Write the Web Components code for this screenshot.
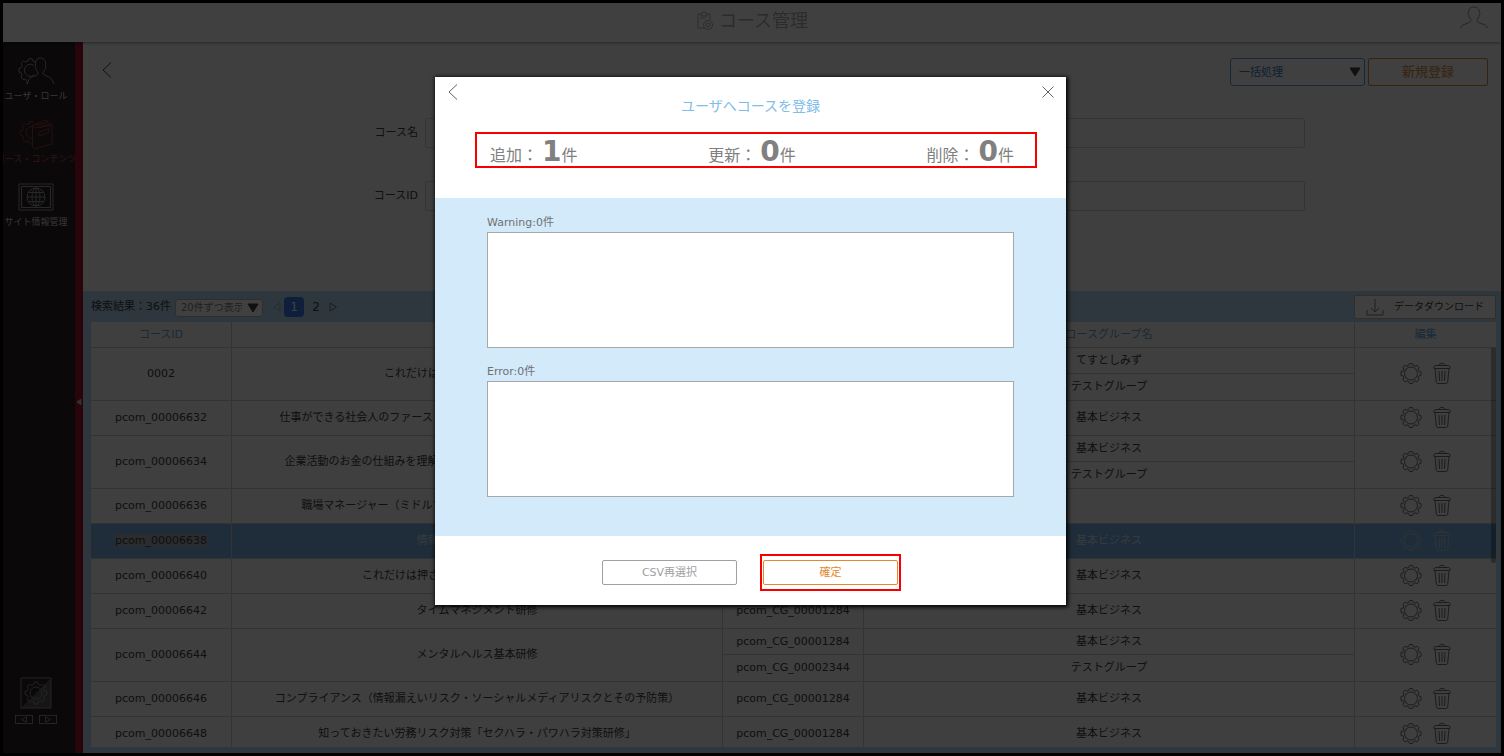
<!DOCTYPE html>
<html lang="ja">
<head>
<meta charset="utf-8">
<meta name="viewport" content="width=device-width, initial-scale=1">
<title>コース管理</title>
<style>
    html, body {
        height: 100%;
        margin: 0;
    }
    body {
        font-family: "DejaVu Sans", "Noto Sans CJK JP", sans-serif;
        font-size: 11px;
        line-height: 16px;
        color: #404040;
    }
</style>
</head>
<body>
<course-app></course-app>

<script>
const icons = {
    back: { box: '0 0 16 16', body: '<path d="M12 0.5 4 8l8 7.5"/>' },
    close: { box: '0 0 16 16', body: '<path d="M2.5 2.5l11 11M13.5 2.5l-11 11"/>' },
    down: { box: '0 0 12 10', body: '<path d="M1 1h10L6 9z" fill="currentColor"/>' },
    left: { box: '0 0 10 10', body: '<path d="M8 1 1.500 5 8 9z"/>' },
    right: { box: '0 0 10 10', body: '<path d="M2 1 8.500 5 2 9z"/>' },
    previous: { box: '0 0 10 7', body: '<path d="M7.500 1 2.500 3.500l5 2.500z"/>' },
    next: { box: '0 0 10 7', body: '<path d="M2.500 1l5 2.500-5 2.500z"/>' },
    collapse: { box: '0 0 6 6', body: '<path d="M5 0 1 3l4 3z" fill="currentColor"/>' },
    download: { box: '0 0 18 18', body: '<path d="M9 1v13M5 10l4 4 4-4M1 12v5h16v-5"/>' },
    person: { box: '0 0 28 24', body: '<path d="M1 22c0-2.500 2-3 5-4.200 3-1.100 5-1.600 5-3.500 0-1.500-2-2.500-2.300-5.300-1-.8-1-2.300 0-2.600C8.700 3 10 1 14 1s5.300 2 5.300 5.400c1 .3 1 1.800 0 2.600C19 11.800 17 12.800 17 14.300c0 1.900 2 2.400 5 3.500 3 1.200 5 1.700 5 4.200"/>' },
    course: { box: '0 0 18 20', body: '<path d="M9 17H2V3h3M11 3h3v6M5 2.500h1.500a1.500 1.500 0 0 1 3 0H11V5H5zM4 7h5"/><circle cx="12" cy="14" r="4.500"/><circle cx="12" cy="14" r="2"/>' },
    gear: { box: '0 0 24 24', body: '<path d="M10.500 1.500h3l.8 2 1.700.7 2-1 2 2-.9 2 .7 1.700 2.200.8v3.600l-2.200.8-.7 1.700.9 2-2 2-2-1-1.700.7-.8 2h-3l-.8-2-1.700-.7-2 1-2-2 .9-2-.7-1.700-2.200-.8V9.700l2.200-.8.700-1.700-.9-2 2-2 2 1 1.700-.7z"/><circle cx="12" cy="11.500" r="6.500"/>' },
    trash: { box: '0 1 20 24', body: '<path d="M7 4.500c0-2.800 6-2.800 6 0M2 7.500V6c0-1 1-1.500 2-1.500h12c1 0 2 .5 2 1.500v1.500zM3 7.500l1.300 13.500c.1.900.7 1.500 1.600 1.500h8.200c.9 0 1.500-.6 1.600-1.500L17 7.500M7 10l.5 10M10 10v10M13 10l-.5 10"/>' },
    users: { box: '0 -2 36 32', body: '<path d="M9 27v-2.500l-1.500-2.500-2.500.5-2-2.500 1-2-1.200-2.500L1 15v-3.500l2.200-.8 1-2.200-1-2.200L5.500 4l2.200 1L10 4l.7-2.200H14L15 4l2.500.8"/><path d="M15.500 18.500a6 6 0 1 1 .5-10"/><path d="M9.500 27c.3-3.500 2-6 5-7.300 3-1.200 5.500-1.700 5.500-3.700 0-1-1.500-2-2-4-1-.5-1.200-2.200-.5-2.700C17 4 18.500 1 22.500 1S28 4 27.500 9.300c.7.5.5 2.200-.5 2.700-.5 2-2 3-2 4 0 2 2.500 2.500 5.500 3.700 3 1.300 4.700 4.300 5 7.300"/>' },
    contents: { box: '0 -1 36 34', body: '<path d="M14 26h-2l-1-2.200-2-.8-2.200 1-2.300-2.300 1-2.200-1-2-2.500-.9v-3.200l2.400-.9.9-2.200L4.300 8 6.600 5.700l2.200 1 2.200-.9.800-2.300h3.200l.9 2"/><path d="M14 20.500a6 6 0 0 1 0-12"/><path d="M14.500 7.500 28 2l2 1.500M14.500 7.500v20.500c0 1.500 1.200 2.500 2.700 2.500L34 26V7.500L18 9.800c-2 .2-3.500-.8-3.500-2.300zM18 7.700l13.500-4.200M20 9.500 34 5.500M21 14l10-3.500v4L21 18z"/>' },
    site: { box: '0 0 36 28', body: '<path d="M1 1h34v26H1zM3.500 3.500h29v21h-29z"/><circle cx="18" cy="14" r="9"/><ellipse cx="18" cy="14" rx="4" ry="9"/><path d="M18 5v18M9 14h18M10.500 9.500h15M10.500 18.500h15"/>' },
    theme: { box: '0 0 32 32', body: '<path d="M31 1v30H1z" fill="#5a5858" stroke="none"/><path d="M1 1h30v30H1z"/><path d="M14.500 5h3l.8 2.500 2 .9 2.300-1.200 2.200 2.200-1.200 2.300.9 2 2.500.8v3l-2.500.8-.9 2 1.200 2.300-2.200 2.200-2.300-1.200-2 .9-.8 2.500h-3l-.8-2.500-2-.9-2.300 1.200-2.200-2.200 1.200-2.300-.9-2-2.500-.8v-3l2.500-.8.9-2-1.200-2.300 2.200-2.200 2.300 1.200 2-.9z"/><circle cx="16" cy="16" r="6"/>' },
}

function attach(element, html) {
    const template = document.createElement('template')
    template.innerHTML = html
    element.attachShadow({ mode: 'open' })
    element.shadowRoot.appendChild(template.content.cloneNode(true))
}

class AppIcon extends HTMLElement {
    static get observedAttributes() {
        return ['name']
    }
    constructor() {
        super()
        this.attachShadow({ mode: 'open' })
    }
    attributeChangedCallback() {
        const icon = icons[this.getAttribute('name')]
        const [, , width, height] = icon.box.split(' ')
        this.shadowRoot.innerHTML = `
            <style>
                :host {
                    display: block;
                    flex: none;
                }
                svg {
                    display: block;
                    fill: none;
                    stroke: currentColor;
                    stroke-width: var(--icon-stroke, 1);
                }
            </style>
            <svg viewBox="${icon.box}" width="${width}" height="${height}" aria-hidden="true">${icon.body}</svg>
        `
    }
}

// Button with an icon only
class IconButton extends HTMLElement {
    constructor() {
        super()
        attach(this, `
            <style>
                :host {
                    display: block;
                }
                button {
                    display: block;
                    margin: 0;
                    padding: 0;
                    border: 0;
                    background: none;
                    color: inherit;
                    cursor: pointer;
                }
            </style>
            <button type="button"><app-icon></app-icon></button>
        `)
        this.shadowRoot.querySelector('app-icon').setAttribute('name', this.getAttribute('icon'))
        this.shadowRoot.querySelector('button').setAttribute('aria-label', this.getAttribute('label'))
    }
}

class OutlineButton extends HTMLElement {
    constructor() {
        super()
        attach(this, `
            <style>
                :host {
                    display: block;
                    --button-color: #a0a0a0;
                }
                :host([kind=primary]) {
                    --button-color: #e08a2c;
                }
                :host([kind=plain]) {
                    --button-color: #404040;
                    --button-border: #b8b8b8;
                }
                button {
                    display: flex;
                    justify-content: center;
                    align-items: center;
                    gap: 10px;
                    box-sizing: border-box;
                    width: 100%;
                    height: 100%;
                    margin: 0;
                    padding: 0;
                    border: 1px solid var(--button-border, var(--button-color));
                    border-radius: 2px;
                    outline-offset: 2px;
                    background-color: white;
                    color: var(--button-color);
                    font: inherit;
                    cursor: pointer;
                }
            </style>
            <button type="button"><slot></slot></button>
        `)
    }
}

// Native select with a filled triangle laid over its right end
class DropDown extends HTMLElement {
    constructor() {
        super()
        attach(this, `
            <style>
                :host {
                    display: grid;
                    align-items: center;
                    color: var(--drop-color, #808080);
                }
                select, app-icon {
                    grid-area: 1 / 1;
                }
                select {
                    appearance: none;
                    box-sizing: border-box;
                    width: 100%;
                    height: 100%;
                    margin: 0;
                    padding: var(--drop-top, 0) 20px 0 var(--drop-indent, 5px);
                    border: 1px solid var(--drop-border, #b8b8b8);
                    border-radius: 3px;
                    background-color: white;
                    color: inherit;
                    font: inherit;
                }
                app-icon {
                    justify-self: end;
                    margin-right: 4px;
                    color: #404040;
                    pointer-events: none;
                }
            </style>
            <select><option></option></select>
            <app-icon name="down"></app-icon>
        `)
        this.shadowRoot.querySelector('option').textContent = this.getAttribute('value')
        this.shadowRoot.querySelector('select').setAttribute('aria-label', this.getAttribute('label'))
    }
}

class AppHeader extends HTMLElement {
    constructor() {
        super()
        attach(this, `
            <style>
                :host {
                    display: grid;
                    grid-template-columns: 1fr auto 1fr;
                    box-sizing: border-box;
                    height: 39px;
                    padding: 0 13px;
                    background-color: white;
                    box-shadow: 0 1px 3px rgba(0, 0, 0, 0.4);
                    z-index: 1;
                }
                h1 {
                    display: flex;
                    grid-column: 2;
                    align-items: center;
                    gap: 5px;
                    margin: 0;
                    font-size: 18px;
                    font-weight: normal;
                    line-height: 24px;
                    color: #b0b0b0;
                    padding-bottom: 4px;
                }
                icon-button {
                    justify-self: end;
                    padding-top: 3px;
                    color: #909090;
                }
            </style>
            <h1><app-icon name="course"></app-icon><slot></slot></h1>
            <icon-button icon="person" label="アカウント"></icon-button>
        `)
    }
}

class NavItem extends HTMLElement {
    constructor() {
        super()
        attach(this, `
            <style>
                :host {
                    display: block;
                    color: #d8d8d8;
                }
                :host([current]) {
                    color: #d04c50;
                }
                a {
                    display: flex;
                    flex-direction: column;
                    align-items: center;
                    color: inherit;
                    font-size: 9px;
                    text-decoration: none;
                    white-space: nowrap;
                }
                .picture {
                    display: flex;
                    align-items: center;
                    height: 34px;
                    opacity: 0.7;
                }
            </style>
            <a href="#"><span class="picture"><app-icon></app-icon></span><slot></slot></a>
        `)
        this.shadowRoot.querySelector('app-icon').setAttribute('name', this.getAttribute('icon'))
    }
}

class SideNav extends HTMLElement {
    constructor() {
        super()
        attach(this, `
            <style>
                :host {
                    display: flex;
                    width: 80px;
                    background-color: #282224;
                }
                nav {
                    display: flex;
                    flex: 1;
                    flex-direction: column;
                    gap: 13px;
                    min-width: 0;
                    padding: 12px 6px 29px 0;
                    overflow: hidden;
                }
                .theme {
                    display: flex;
                    flex-direction: column;
                    align-items: center;
                    gap: 6px;
                    margin-top: auto;
                    color: #909090;
                }
                .steps {
                    display: flex;
                    gap: 6px;
                }
                .steps icon-button {
                    padding: 0 3px;
                    border: 1px solid;
                }
                .edge {
                    display: flex;
                    justify-content: center;
                    align-items: center;
                    width: 8px;
                    padding-top: 8px;
                    background-color: #a8102c;
                    color: #c0c0c0;
                }
            </style>
            <nav>
                <nav-item icon="users">ユーザ・ロール</nav-item>
                <nav-item icon="contents" current>コース・コンテンツ</nav-item>
                <nav-item icon="site">サイト情報管理</nav-item>
                <div class="theme">
                    <app-icon name="theme"></app-icon>
                    <div class="steps">
                        <icon-button icon="previous" label="前へ"></icon-button>
                        <icon-button icon="next" label="次へ"></icon-button>
                    </div>
                </div>
            </nav>
            <div class="edge"><icon-button icon="collapse" label="メニューを閉じる"></icon-button></div>
        `)
    }
}

class SearchForm extends HTMLElement {
    constructor() {
        super()
        attach(this, `
            <style>
                :host {
                    display: block;
                    box-sizing: border-box;
                    min-height: 249px;
                }
                .toolbar {
                    display: flex;
                    gap: 3px;
                    height: 28px;
                    padding: 16px 13px 0 16px;
                }
                .toolbar > icon-button {
                    margin: 4px auto 0 0;
                }
                drop-down {
                    width: 135px;
                    --drop-color: #3c80c8;
                    --drop-border: #58a0e0;
                    --drop-indent: 8px;
                    --drop-top: 2px;
                }
                outline-button {
                    width: 120px;
                    font-size: 13px;
                }
                form {
                    display: grid;
                    grid-template-columns: 335px 1fr;
                    gap: 33px 7px;
                    align-items: center;
                    padding: 32px 196px 0 0;
                }
                label {
                    text-align: right;
                }
                input {
                    box-sizing: border-box;
                    width: 100%;
                    height: 30px;
                    margin: 0;
                    border: 1px solid #d0d0d0;
                    border-radius: 2px;
                    background-color: transparent;
                    font: inherit;
                }
            </style>
            <div class="toolbar">
                <icon-button icon="back" label="戻る"></icon-button>
                <drop-down value="一括処理" label="一括処理"></drop-down>
                <outline-button kind="primary">新規登録</outline-button>
            </div>
            <form>
                <label for="name">コース名</label>
                <input id="name" type="text">
                <label for="id">コースID</label>
                <input id="id" type="text">
            </form>
        `)
    }
}

const business = ['pcom_CG_00001284', '基本ビジネス']
const test = ['pcom_CG_00002344', 'テストグループ']
const courses = [
    { id: '0002', name: 'これだけは押さえておきたい労務管理', groups: [['pcom_CG_00000001', 'てすとしみず'], test] },
    { id: 'pcom_00006632', name: '仕事ができる社会人のファーストステップ（ビジネスマナーと報連相の基礎力）', groups: [business] },
    { id: 'pcom_00006634', name: '企業活動のお金の仕組みを理解する（決算書の読み方とコスト意識の基礎力）', groups: [business, test] },
    { id: 'pcom_00006636', name: '職場マネージャー（ミドルマネジメント）のための部下育成と目標管理', groups: [['', '']] },
    { id: 'pcom_00006638', name: '情報セキュリティの基本', groups: [business], selected: true },
    { id: 'pcom_00006640', name: 'これだけは押さえておきたいビジネス文書研修', groups: [business] },
    { id: 'pcom_00006642', name: 'タイムマネジメント研修', groups: [business] },
    { id: 'pcom_00006644', name: 'メンタルヘルス基本研修', groups: [business, test] },
    { id: 'pcom_00006646', name: 'コンプライアンス（情報漏えいリスク・ソーシャルメディアリスクとその予防策）', groups: [business] },
    { id: 'pcom_00006648', name: '知っておきたい労務リスク対策「セクハラ・パワハラ対策研修」', groups: [business] },
]

class CourseTable extends HTMLElement {
    constructor() {
        super()
        attach(this, `
            <style>
                :host {
                    display: block;
                    position: relative;
                    overflow: hidden;
                    background-color: #fafafa;
                }
                table {
                    width: 100%;
                    table-layout: fixed;
                    border-spacing: 0;
                }
                col.narrow {
                    width: 141px;
                }
                th, td {
                    box-sizing: border-box;
                    padding: 0;
                    border: 0 solid #cccccc;
                    border-width: 0 1px 1px 0;
                    text-align: center;
                    white-space: nowrap;
                }
                th:last-child, td.edit {
                    border-right: 0;
                }
                th {
                    height: 26px;
                    font-weight: normal;
                    color: #64a8dc;
                }
                td {
                    height: 35px;
                }
                .split td {
                    height: 26px;
                }
                .more td {
                    height: 27px;
                }
                .selected td {
                    background-color: #78b4e4;
                    color: #d8e8f8;
                }
                mark {
                    background-color: #a8b0b8;
                    color: #404040;
                }
                .tools {
                    display: flex;
                    justify-content: center;
                    gap: 9px;
                    color: #707070;
                }
                .selected .tools {
                    color: #b8cce0;
                }
                .thumb {
                    position: absolute;
                    top: 26px;
                    right: 0;
                    width: 5px;
                    height: 215px;
                    border-radius: 0 0 3px 3px;
                    background-color: rgba(0, 0, 0, 0.3);
                }
            </style>
            <table>
                <colgroup><col class="narrow"><col><col class="narrow"><col><col class="narrow"></colgroup>
                <thead>
                    <tr><th>コースID</th><th>コース名</th><th>コースグループID</th><th>コースグループ名</th><th>編集</th></tr>
                </thead>
                <tbody></tbody>
            </table>
            <div class="thumb"></div>
        `)
        this.shadowRoot.querySelector('tbody').innerHTML = courses.map(course => this.renderCourse(course)).join('')
    }

    renderCourse({ id, name, groups, selected }) {
        const span = groups.length
        const kind = selected ? 'selected' : span > 1 ? 'split' : ''
        const [first, ...rest] = groups
        return `
            <tr class="${kind}">
                <td rowspan="${span}">${selected ? `<mark>${id}</mark>` : id}</td>
                <td rowspan="${span}">${name}</td>
                <td>${first[0]}</td>
                <td>${first[1]}</td>
                <td rowspan="${span}" class="edit">
                    <div class="tools">
                        <icon-button icon="gear" label="設定"></icon-button>
                        <icon-button icon="trash" label="削除"></icon-button>
                    </div>
                </td>
            </tr>
            ${rest.map(group => `<tr class="more"><td>${group[0]}</td><td>${group[1]}</td></tr>`).join('')}
        `
    }
}

class ResultPanel extends HTMLElement {
    constructor() {
        super()
        attach(this, `
            <style>
                :host {
                    display: flex;
                    flex-direction: column;
                    min-height: 0;
                    padding: 0 5px 6px 8px;
                    background-color: #b4dcf4;
                }
                .bar {
                    display: flex;
                    flex: none;
                    align-items: center;
                    gap: 4px;
                    height: 31px;
                }
                drop-down {
                    width: 88px;
                    height: 16px;
                    font-size: 10px;
                }
                .pages {
                    display: flex;
                    align-items: center;
                    gap: 2px;
                    margin: 0 auto 0 5px;
                    font-size: 12px;
                }
                .pages a {
                    width: 20px;
                    border-radius: 4px;
                    color: inherit;
                    line-height: 20px;
                    text-align: center;
                    text-decoration: none;
                }
                .pages a[aria-current] {
                    background-color: #3c7cec;
                    color: white;
                }
                .pages icon-button {
                    color: #707070;
                }
                .pages icon-button:first-child {
                    color: #90b0c4;
                }
                outline-button {
                    width: 142px;
                    height: 24px;
                    font-size: 10px;
                }
                outline-button app-icon {
                    color: #808080;
                }
                course-table {
                    flex: 1;
                    min-height: 0;
                }
            </style>
            <div class="bar">
                <span>検索結果：36件</span>
                <drop-down value="20件ずつ表示" label="表示件数"></drop-down>
                <nav class="pages">
                    <icon-button icon="left" label="前のページ"></icon-button>
                    <a href="#" aria-current="page">1</a>
                    <a href="#">2</a>
                    <icon-button icon="right" label="次のページ"></icon-button>
                </nav>
                <outline-button kind="plain"><app-icon name="download"></app-icon>データダウンロード</outline-button>
            </div>
            <course-table></course-table>
        `)
    }
}

class CountItem extends HTMLElement {
    constructor() {
        super()
        attach(this, `
            <style>
                :host {
                    display: flex;
                    align-items: baseline;
                    font-size: 16px;
                    line-height: 28px;
                }
                b {
                    margin-left: 4px;
                    font-size: 28px;
                }
            </style>
            <slot></slot><b></b><span>件</span>
        `)
        this.shadowRoot.querySelector('b').textContent = this.getAttribute('count')
    }
}

class ImportDialog extends HTMLElement {
    constructor() {
        super()
        attach(this, `
            <style>
                :host {
                    position: absolute;
                    inset: 0;
                    display: flex;
                    justify-content: center;
                    align-items: flex-start;
                    padding: 74px 3px 0 0;
                    background-color: rgba(0, 0, 0, 0.75);
                    z-index: 10;
                }
                .dialog {
                    width: 631px;
                    background-color: white;
                    color: #707070;
                    box-shadow: 1px 1px 4px 1px black;
                }
                .head {
                    display: grid;
                    grid-template-columns: 16px 1fr 16px;
                    padding: 7px 10px 0;
                }
                .head icon-button {
                    color: #606060;
                }
                h2 {
                    margin: 0;
                    padding-top: 14px;
                    font-size: 14px;
                    font-weight: normal;
                    text-align: center;
                    color: #80bcec;
                }
                .counts {
                    display: flex;
                    justify-content: space-between;
                    box-sizing: border-box;
                    height: 36px;
                    margin: 18px 29px 30px 40px;
                    padding: 4px 21px 0 13px;
                    border: 2px solid #f80000;
                    color: #808080;
                }
                .logs {
                    display: flex;
                    flex-direction: column;
                    padding: 17px 52px 39px;
                    background-color: #d2eafa;
                }
                textarea {
                    box-sizing: border-box;
                    width: 100%;
                    height: 116px;
                    margin: 1px 0 16px;
                    border: 1px solid #a8a8a8;
                    background-color: white;
                    font: inherit;
                    resize: none;
                }
                textarea:last-child {
                    margin-bottom: 0;
                }
                .buttons {
                    display: flex;
                    justify-content: center;
                    align-items: center;
                    gap: 23px;
                    padding: 18px 0 14px 2px;
                }
                outline-button {
                    width: 135px;
                    height: 25px;
                }
                .marked {
                    padding: 4px 1px;
                    border: 2px solid #f80000;
                }
            </style>
            <div class="dialog" role="dialog" aria-labelledby="title">
                <div class="head">
                    <icon-button icon="back" label="戻る"></icon-button>
                    <h2 id="title">ユーザへコースを登録</h2>
                    <icon-button icon="close" label="閉じる"></icon-button>
                </div>
                <div class="counts">
                    <count-item count="1">追加：</count-item>
                    <count-item count="0">更新：</count-item>
                    <count-item count="0">削除：</count-item>
                </div>
                <div class="logs">
                    <label for="warning">Warning:0件</label>
                    <textarea id="warning" readonly></textarea>
                    <label for="error">Error:0件</label>
                    <textarea id="error" readonly></textarea>
                </div>
                <div class="buttons">
                    <outline-button>CSV再選択</outline-button>
                    <div class="marked"><outline-button kind="primary">確定</outline-button></div>
                </div>
            </div>
        `)
    }
}

class CourseApp extends HTMLElement {
    constructor() {
        super()
        attach(this, `
            <style>
                :host {
                    position: relative;
                    display: flex;
                    flex-direction: column;
                    box-sizing: border-box;
                    height: 100vh;
                    border: 3px solid black;
                    overflow: hidden;
                }
                .body {
                    display: flex;
                    flex: 1;
                    min-height: 0;
                }
                main {
                    display: flex;
                    flex: 1;
                    flex-direction: column;
                    min-width: 0;
                    background-color: #fcfcfc;
                }
                result-panel {
                    flex: 1;
                }
            </style>
            <app-header>コース管理</app-header>
            <div class="body">
                <side-nav></side-nav>
                <main>
                    <search-form></search-form>
                    <result-panel></result-panel>
                </main>
            </div>
            <import-dialog></import-dialog>
        `)
    }
}

customElements.define('app-icon', AppIcon)
customElements.define('icon-button', IconButton)
customElements.define('outline-button', OutlineButton)
customElements.define('drop-down', DropDown)
customElements.define('app-header', AppHeader)
customElements.define('nav-item', NavItem)
customElements.define('side-nav', SideNav)
customElements.define('search-form', SearchForm)
customElements.define('course-table', CourseTable)
customElements.define('result-panel', ResultPanel)
customElements.define('count-item', CountItem)
customElements.define('import-dialog', ImportDialog)
customElements.define('course-app', CourseApp)
</script>
</body>
</html>
